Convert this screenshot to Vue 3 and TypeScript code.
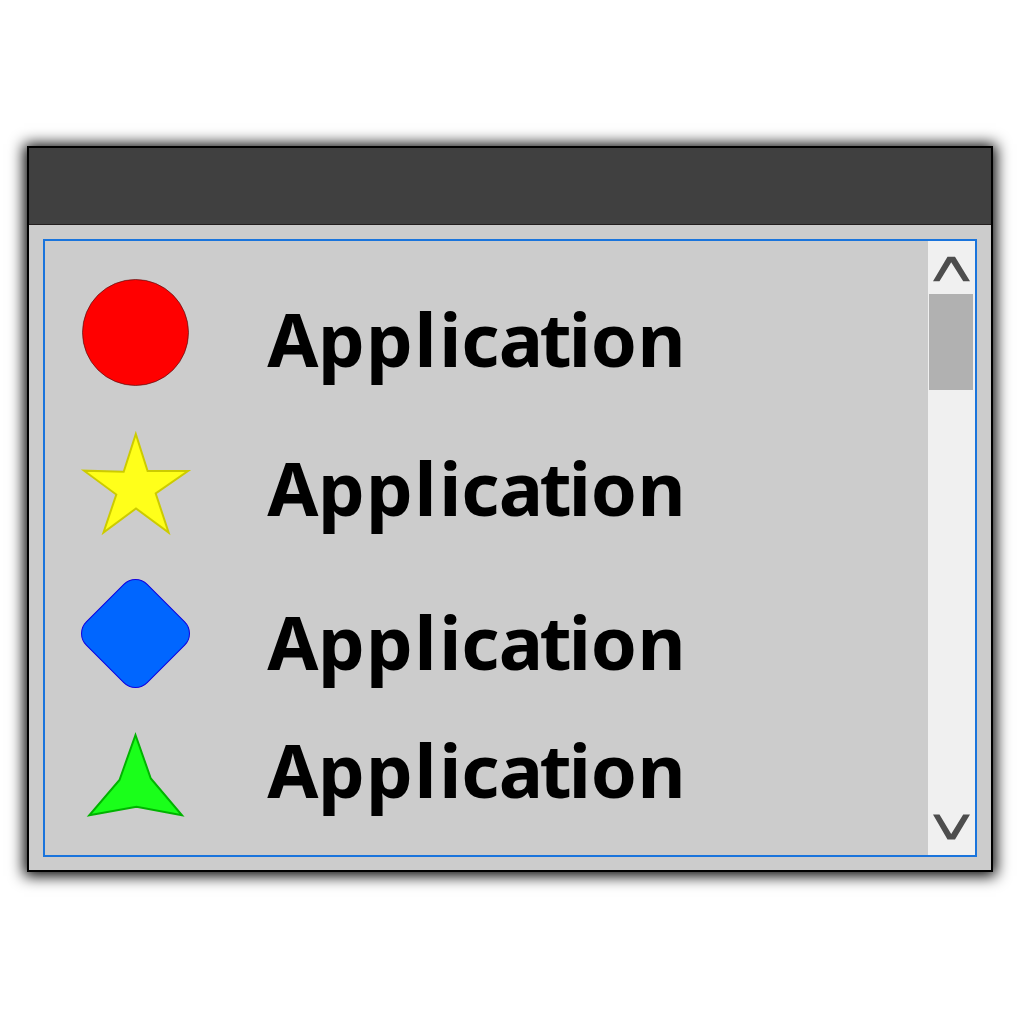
<script setup lang="ts">
interface Row { kind: 'circle' | 'star' | 'diamond' | 'arrow'; height: number; baseline: number }

const rows: Row[] = [
  { kind: 'circle', height: 179, baseline: 126.3 },
  { kind: 'star', height: 149, baseline: 96 },
  { kind: 'diamond', height: 150, baseline: 100.6 },
  { kind: 'arrow', height: 135, baseline: 79 },
]
const label = 'Application'
// horizontal origin of every letter in the label
const advance = '7.3 57.9 105.9 154.4 179.2 201.2 238.8 279.4 308.7 330.8 377.4'
</script>

<template>
  <div class="screen">
    <div class="window">
      <header class="titlebar"></header>
      <main class="panel">
        <div class="list">
          <div v-for="row in rows" :key="row.kind" class="row" :style="{ height: row.height + 'px' }">
            <svg class="icon" width="185" :height="row.height">
              <circle v-if="row.kind === 'circle'" cx="90.5" cy="91.5" r="53" fill="#f00" stroke="#5a1010" stroke-width=".7" />
              <polygon v-else-if="row.kind === 'star'" points="90.8,14 102.6,51 143,51 110.7,73.5 123.6,112.5 91,88.5 58.5,112.5 71.3,74.5 39,50.7 78.7,51.7" fill="#ffff1a" stroke="#cccb00" stroke-width="2" />
              <rect v-else-if="row.kind === 'diamond'" x="47.5" y="21.5" width="86" height="86" rx="16.5" transform="rotate(45 90.5 64.5)" fill="#06f" stroke="#1000e0" stroke-width="1" />
              <polygon v-else points="90.5,16 105.8,59.5 137,96.3 91.5,87.8 44.3,96.3 74.5,61" fill="#1aff1a" stroke="#00b300" stroke-width="2" />
            </svg>
            <svg class="label" width="440" :height="row.height">
              <text :x="advance" :y="row.baseline">{{ label }}</text>
            </svg>
          </div>
        </div>
        <div class="scrollbar">
          <svg width="47" height="53"><polygon points="5,40.3 19.5,15.7 27,15.7 42,40.3 35.2,40.3 23.2,21.3 11.5,40.3" fill="#4d4d4d" /></svg>
          <div class="thumb"></div>
          <svg class="down" width="47" height="52"><polygon points="5,11.5 11.5,11.5 23.2,31 35.2,11.5 42,11.5 27,36.5 19.5,36.5" fill="#4d4d4d" /></svg>
        </div>
      </main>
    </div>
  </div>
</template>

<style>
body { background: #fff; }
</style>

<style scoped>
.screen {
  box-sizing: border-box;
  width: 1020px;
  height: 1020px;
  padding: 146px 27px 0;
  overflow: hidden;
}
.window {
  box-sizing: border-box;
  width: 966px;
  height: 726px;
  border: 2px solid #000;
  background: #ccc;
  box-shadow: 0 1px 14px 3px #000;
}
.titlebar {
  box-sizing: border-box;
  height: 77px;
  background: #404040;
  border-bottom: 1px solid #231f1f;
}
.panel {
  box-sizing: border-box;
  display: flex;
  width: 934px;
  height: 618px;
  margin: 14px 0 0 14px;
  border: 2px solid #1a74dc;
}
.list { flex: 1; }
.row { display: flex; }
.icon, .label { display: block; flex: none; }
.label { margin-left: 30px; overflow: visible; }
.label text {
  font: 700 74px "Noto Sans", "Open Sans", sans-serif;
  fill: #000;
}
.scrollbar {
  display: flex;
  flex-direction: column;
  width: 47px;
  background: #f0f0f0;
}
.scrollbar svg { display: block; flex: none; }
.thumb {
  width: 44px;
  height: 96px;
  margin-left: 1px;
  background: #b1b1b1;
}
.scrollbar .down { margin-top: auto; }
</style>
